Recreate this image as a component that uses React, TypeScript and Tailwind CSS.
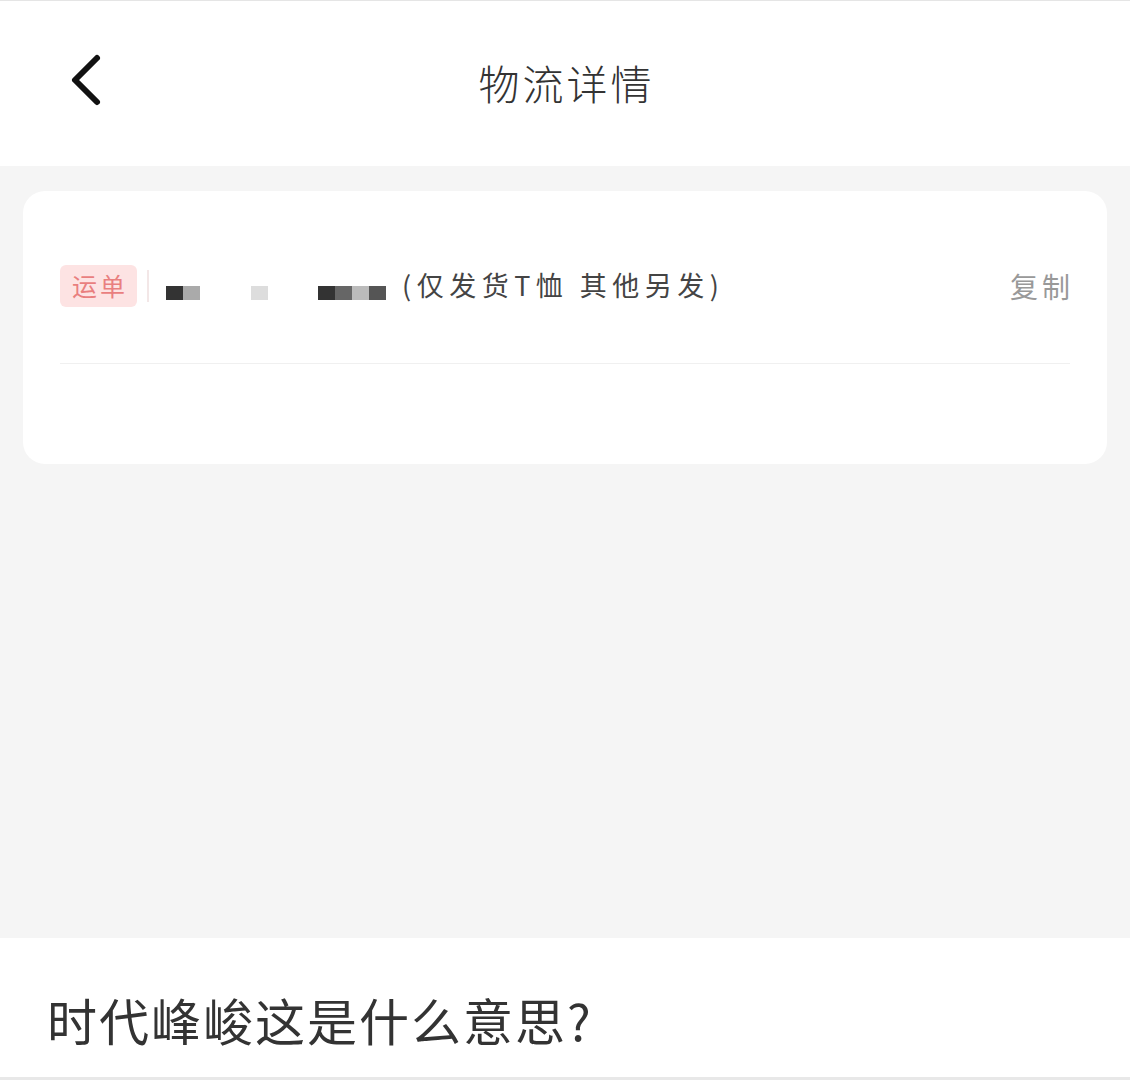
export default function App() {
  const cjk = { fontFamily: '"Noto Sans CJK SC", "Noto Sans", sans-serif' }
  return (
    <div className="w-[1130px] h-[1080px] bg-white flex flex-col overflow-hidden" style={cjk}>
      {/* header */}
      <div className="h-[166px] relative flex items-center justify-center border-t border-[#e5e5e5] shrink-0">
        <svg className="absolute left-[66px] top-[52px]" width="40" height="54" viewBox="0 0 40 54" fill="none">
          <path d="M31 5 L9 27 L31 49" stroke="#111" strokeWidth="6" strokeLinecap="round" strokeLinejoin="round" />
        </svg>
        <div className="text-[41px] text-[#333] tracking-[3px] pl-[3px] font-light -mt-[2px]">物流详情</div>
      </div>

      {/* body */}
      <div className="flex-1 bg-[#f5f5f5] px-[23px] pt-[25px]">
        <div className="bg-white rounded-[22px] h-[273px] px-[37px]">
          <div className="h-[173px] flex items-center border-b border-[#f0f0f0] pt-[17px]">
            <div className="flex items-center">
              <div className="w-[77px] h-[42px] rounded-[6px] bg-[#fde3e3] flex items-center justify-center text-[25px] text-[#e97f7f] tracking-[3px] pl-[3px]">
                运单
              </div>
              <div className="w-[2px] h-[32px] bg-[#f3e7e7] ml-[10px]" />
              <div className="flex items-center ml-[17px] mt-[14px]">
                <div className="w-[17px] h-[14px] bg-[#333]" />
                <div className="w-[17px] h-[14px] bg-[#aaa]" />
                <div className="w-[17px] h-[14px] bg-[#ddd] ml-[51px]" />
                <div className="w-[17px] h-[14px] bg-[#333] ml-[50px]" />
                <div className="w-[17px] h-[14px] bg-[#666]" />
                <div className="w-[17px] h-[14px] bg-[#bbb]" />
                <div className="w-[17px] h-[14px] bg-[#555]" />
              </div>
              <div className="ml-[16px] text-[27px] text-[#444] tracking-[5.5px]">(仅发货T恤 其他另发)</div>
            </div>
            <div className="ml-auto text-[28px] text-[#999] tracking-[4px] -mr-[4px]">复制</div>
          </div>
        </div>
      </div>

      {/* question */}
      <div className="h-[142px] shrink-0 bg-white border-b-[3px] border-[#e8e8e8] flex items-center pl-[47px] pt-[24px]">
        <div className="text-[50px] text-[#333] tracking-[2px]">时代峰峻这是什么意思?</div>
      </div>
    </div>
  )
}
